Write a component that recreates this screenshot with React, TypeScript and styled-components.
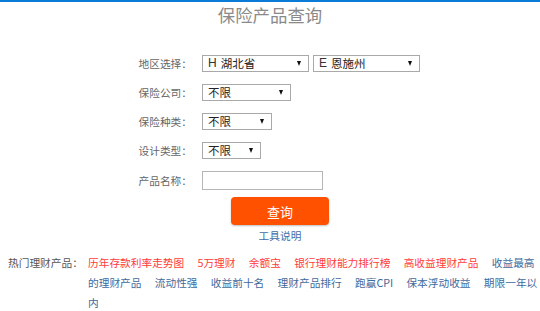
import React from "react";
import styled, { createGlobalStyle } from "styled-components";

const GlobalStyle = createGlobalStyle`
  html, body { margin: 0; padding: 0; background: #fff; }
  body {
    font-family: "Noto Sans CJK SC", "Noto Sans", "Liberation Sans", sans-serif;
    width: 540px;
    overflow: hidden;
  }
`;

const Page = styled.div`
  width: 540px;
  height: 311px;
  border-top: 2px solid #0b7bd8;
  box-sizing: border-box;
`;

const Title = styled.h1`
  margin: 0;
  font-size: 17.4px;
  line-height: 26px;
  font-weight: normal;
  color: #8a8a8a;
  text-align: center;
`;

const Form = styled.div`
  display: grid;
  grid-template-columns: 60px auto;
  column-gap: 10px;
  row-gap: 12px;
  margin: 27px 0 0 132px;
  align-items: center;
`;

const Label = styled.div`
  font-size: 10.7px;
  line-height: 17px;
  color: #666;
  text-align: right;
  white-space: nowrap;
`;

const Fields = styled.div`
  display: flex;
  gap: 4px;
  align-items: center;
`;

const SelectBox = styled.div<{ $w: number }>`
  width: ${(p) => p.$w}px;
  height: 17px;
  box-sizing: border-box;
  border: 1px solid #a9a9a9;
  background: #fff;
  display: flex;
  align-items: center;
  justify-content: space-between;
  padding: 0 7px 0 5px;
  font-size: 11.5px;
  color: #222;
  white-space: nowrap;
`;

const SelectText = styled.span`
  display: flex;
  gap: 4px;
  line-height: 15px;
`;

const Letter = styled.span`
  font-family: "Liberation Sans", sans-serif;
  font-size: 12px;
  color: #333;
`;

const Arrow = styled.span`
  width: 0;
  height: 0;
  border-left: 2.5px solid transparent;
  border-right: 2.5px solid transparent;
  border-top: 5px solid #111;
`;

const TextInput = styled.input`
  width: 121px;
  height: 19px;
  box-sizing: border-box;
  border: 1px solid #b5b5b5;
  padding: 0 4px;
  margin: 0;
  outline: none;
  font-size: 11px;
  font-family: inherit;
`;

const Actions = styled.div`
  width: 98px;
  margin: 7px 0 0 231px;
  display: flex;
  flex-direction: column;
  align-items: center;
`;

const SearchButton = styled.button`
  width: 98px;
  height: 28px;
  border: none;
  border-radius: 4px;
  background: #ff5100;
  color: #fff;
  font-family: inherit;
  font-size: 13px;
  box-shadow: 0 1px 2px rgba(0, 0, 0, 0.25);
  padding: 0;
  cursor: pointer;
`;

const HelpLink = styled.a`
  margin-top: 4px;
  font-size: 10.7px;
  line-height: 14px;
  color: #3d6da6;
  text-decoration: none;
  white-space: nowrap;
`;

const Hot = styled.div`
  display: flex;
  margin-top: 10px;
  padding-left: 8px;
  font-size: 10.7px;
  line-height: 20px;
`;

const HotLabel = styled.div`
  width: 80px;
  flex: none;
  color: #555;
  white-space: nowrap;
`;

const HotList = styled.div`
  width: 450px;
  flex: none;
`;

const HotItem = styled.a<{ $red?: boolean }>`
  color: ${(p) => (p.$red ? "#ff3b3b" : "#40699c")};
  text-decoration: none;
  margin-right: 13.3px;
`;

const Sel = ({ w, letter, text }: { w: number; letter?: string; text: string }) => (
  <SelectBox $w={w}>
    <SelectText>
      {letter && <Letter>{letter}</Letter>}
      <span>{text}</span>
    </SelectText>
    <Arrow />
  </SelectBox>
);

const hot: { t: string; red?: boolean }[] = [
  { t: "历年存款利率走势图", red: true },
  { t: "5万理财", red: true },
  { t: "余额宝", red: true },
  { t: "银行理财能力排行榜", red: true },
  { t: "高收益理财产品", red: true },
  { t: "收益最高的理财产品" },
  { t: "流动性强" },
  { t: "收益前十名" },
  { t: "理财产品排行" },
  { t: "跑赢CPI" },
  { t: "保本浮动收益" },
  { t: "期限一年以内" },
];

export default function App() {
  return (
    <>
      <GlobalStyle />
      <Page>
        <Title>保险产品查询</Title>
        <Form>
          <Label>地区选择：</Label>
          <Fields>
            <Sel w={107} letter="H" text="湖北省" />
            <Sel w={107} letter="E" text="恩施州" />
          </Fields>
          <Label>保险公司：</Label>
          <Fields>
            <Sel w={89} text="不限" />
          </Fields>
          <Label>保险种类：</Label>
          <Fields>
            <Sel w={70} text="不限" />
          </Fields>
          <Label>设计类型：</Label>
          <Fields>
            <Sel w={59} text="不限" />
          </Fields>
          <Label>产品名称：</Label>
          <Fields>
            <TextInput type="text" />
          </Fields>
        </Form>
        <Actions>
          <SearchButton>查询</SearchButton>
          <HelpLink href="#">工具说明</HelpLink>
        </Actions>
        <Hot>
          <HotLabel>热门理财产品：</HotLabel>
          <HotList>
            {hot.map((h) => (
              <HotItem key={h.t} $red={h.red} href="#">
                {h.t}
              </HotItem>
            ))}
          </HotList>
        </Hot>
      </Page>
    </>
  );
}
